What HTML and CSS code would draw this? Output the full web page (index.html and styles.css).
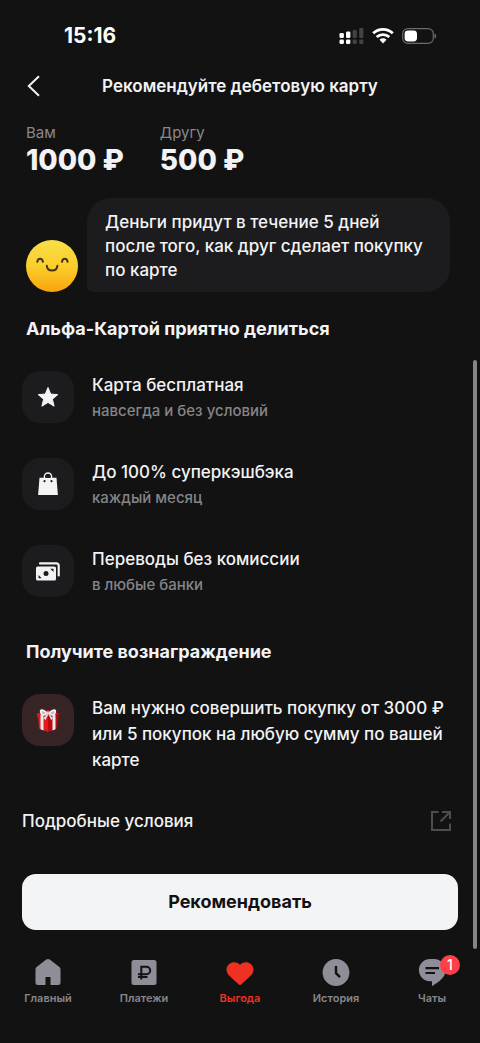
FILE: index.html
```html
<!DOCTYPE html>
<html lang="ru">
<head>
<meta charset="utf-8">
<meta name="viewport" content="width=device-width, initial-scale=1">
<title>Рекомендуйте дебетовую карту</title>
<link rel="stylesheet" href="styles.css">
</head>
<body>
<div class="screen">
  <div class="status">
    <span class="status-time">15:16</span>
    <div class="status-icons">
      <svg width="25" height="18" viewBox="0 0 25 18" aria-hidden="true">
        <g fill="#fff"><rect x="0.5" y="6" width="4.4" height="5" rx="1.3"/><rect x="7" y="4.500" width="4.400" height="6.500" rx="1.3"/><rect x="0.5" y="12.5" width="4.4" height="4.6" rx="1.3"/><rect x="7" y="12.5" width="4.4" height="4.6" rx="1.3"/></g>
        <g fill="#434344"><rect x="13.6" y="3" width="4.2" height="8" rx="1.3"/><rect x="20.2" y="1" width="4.2" height="10" rx="1.3"/><rect x="13.6" y="12.5" width="4.2" height="4.6" rx="1.3"/><rect x="20.2" y="12.5" width="4.2" height="4.6" rx="1.3"/></g>
      </svg>
      <svg width="22" height="18" viewBox="0 0 22 18" aria-hidden="true">
        <g fill="none" stroke="#fff" stroke-width="2.8"><path d="M1.2 6.300a14 14 0 0 1 19.600 0"/><path d="M4.700 10.100a9 9 0 0 1 12.600 0"/></g>
        <path d="M7.500 12.700a5 5 0 0 1 7 0L11 16.500z" fill="#fff"/>
      </svg>
      <svg width="35" height="18" viewBox="0 0 35 18" aria-hidden="true">
        <rect x=".7" y="1.700" width="30.600" height="14.600" rx="5" fill="none" stroke="#6b6b6c" stroke-width="1.2"/>
        <rect x="2.6" y="3.500" width="12.400" height="11" rx="3.400" fill="#fff"/>
        <path d="M32.500 6.400C34.800 7.300 34.800 10.700 32.500 11.600z" fill="#6b6b6c"/>
      </svg>
    </div>
  </div>

  <header class="header">
    <button class="back" type="button" aria-label="Назад">
      <svg width="14" height="22" viewBox="0 0 14 22" aria-hidden="true"><path d="M12 1.2 1.800 11 12 20.800" fill="none" stroke="#f3f3f4" stroke-width="2"/></svg>
    </button>
    <h1 class="header-title">Рекомендуйте дебетовую карту</h1>
  </header>

  <main class="content">
    <dl class="rewards">
      <div class="reward"><dt>Вам</dt><dd>1000 ₽</dd></div>
      <div class="reward"><dt>Другу</dt><dd>500 ₽</dd></div>
    </dl>

    <div class="message">
      <svg class="avatar" viewBox="0 0 52 52" aria-hidden="true">
        <defs><linearGradient id="face" x1="0" y1="0" x2="0" y2="1"><stop offset="0" stop-color="#f9de48"/><stop offset=".5" stop-color="#fbce2c"/><stop offset="1" stop-color="#f9a40c"/></linearGradient></defs>
        <circle cx="26" cy="26" r="26" fill="url(#face)"/>
        <g fill="none" stroke="#43331a" stroke-width="2" stroke-linecap="round"><path d="M11.300 21.800c.6-4 5-4 5.600 0"/><path d="M36 21.800c.6-4 5-4 5.600 0"/><path d="M20.800 25.800c.6 6.300 10 6.300 10.600 0"/></g>
      </svg>
      <p class="bubble">Деньги придут в течение 5 дней после того, как друг сделает покупку по карте</p>
    </div>

    <h2 class="section-title">Альфа-Картой приятно делиться</h2>
    <ul class="benefits">
      <li class="row">
        <span class="tile"><svg width="24" height="24" viewBox="0 0 24 24" aria-hidden="true"><path d="M12 2.500 14.700 9.100 21.800 9.600 16.400 14.200 18.100 21.200 12 17.400 5.900 21.200 7.600 14.200 2.200 9.600 9.300 9.100z" fill="#f3f3f4" stroke="#f3f3f4" stroke-width="1" stroke-linejoin="round"/></svg></span>
        <div class="row-text"><p class="row-title">Карта бесплатная</p><p class="row-note">навсегда и без условий</p></div>
      </li>
      <li class="row">
        <span class="tile"><svg width="24" height="24" viewBox="0 0 24 24" aria-hidden="true"><path d="M3.500 5.800h17l1.400 17.200H2.100z" fill="#f3f3f4"/><path d="M8.500 8.500V4.500a3.500 3.500 0 0 1 7 0v4" fill="none" stroke="#f3f3f4" stroke-width="1.600"/><path d="M9.300 5.800V4.800a2.700 2.700 0 0 1 5.400 0v1z" fill="#1c1c1e"/><circle cx="8.500" cy="9.200" r="1.100" fill="#1c1c1e"/><circle cx="15.500" cy="9.200" r="1.100" fill="#1c1c1e"/></svg></span>
        <div class="row-text"><p class="row-title">До 100% суперкэшбэка</p><p class="row-note">каждый месяц</p></div>
      </li>
      <li class="row">
        <span class="tile"><svg width="24" height="24" viewBox="0 0 24 24" aria-hidden="true"><path d="M4 4.400h16.500a2.200 2.200 0 0 1 2.200 2.200v9.800" fill="none" stroke="#f3f3f4" stroke-width="2.200" stroke-linecap="round"/><rect x="0" y="7.500" width="20" height="14" rx="1.600" fill="#f3f3f4"/><circle cx="10" cy="14.500" r="2.500" fill="#1c1c1e"/><path d="M2.500 19.300v-3.200l3.200 3.200zM17.500 9.700v3.200l-3.200-3.200z" fill="#1c1c1e"/></svg></span>
        <div class="row-text"><p class="row-title">Переводы без комиссии</p><p class="row-note">в любые банки</p></div>
      </li>
    </ul>

    <h2 class="section-title section-title-last">Получите вознаграждение</h2>
    <div class="row">
      <span class="tile tile-gift"><svg width="24" height="24" viewBox="0 0 24 24" aria-hidden="true">
        <path d="M2 8 12 11v13L3 20.500z" fill="#e3191b"/><path d="M22 8 12 11v13l9-3.500z" fill="#b90c10"/>
        <path d="M1 5.500 12 2l11 3.500V9l-11 3.500L1 9z" fill="#d91619"/><path d="M12 8.500 23 5.500V9l-11 3.500z" fill="#a9090d"/>
        <path d="M4.500 6.500 7.500 7.500v15l-3-1.200zM19.500 6.500l-3 1v15l3-1.200z" fill="#ece9ec"/>
        <path d="M12 5C9 1.500 5 0 4 2.200 3.300 4 5 7 6 7.500c2 .8 4.500-.5 6-2.500zM12 5c3-3.500 7-5 8-2.800.7 1.800-1 4.800-2 5.300-2 .8-4.500-.5-6-2.500z" fill="#f2eff2"/>
        <path d="m11.500 5-4.500 6 1.500-.2.800 1.700L12.500 6l2.700 6.500.8-1.700 1.500.2-5-6z" fill="#e2dde2"/><path d="M6 3.200c1.300 0 2.800 1 3.800 2-1.200.6-2.700.9-3.300.5C6 5 5.700 4 6 3.200zM18 3.200c-1.300 0-2.800 1-3.800 2 1.200.6 2.700.9 3.300.5.500-.7.800-1.700.5-2.500z" fill="#bdb6be"/><circle cx="12" cy="4.800" r="1.600" fill="#d4ccd3"/>
      </svg></span>
      <p class="row-title row-text">Вам нужно совершить покупку от 3000 ₽ или 5 покупок на любую сумму по вашей карте</p>
    </div>

    <a class="terms" href="#">
      <span>Подробные условия</span>
      <svg width="22" height="22" viewBox="0 0 22 22" aria-hidden="true"><path d="M8.500 2H2v18h18v-6.500M12 2h8v7M20 2l-9.500 9.500" fill="none" stroke="#4d4d4f" stroke-width="2"/></svg>
    </a>
    <button class="primary" type="button">Рекомендовать</button>
  </main>

  <nav class="tabs">
    <a class="tab" href="#">
      <svg width="28" height="28" viewBox="0 0 28 28" aria-hidden="true"><path d="M12.300 1.600a3 3 0 0 1 3.400 0l9.400 7.200a3 3 0 0 1 1.400 2.500v13.200a2.500 2.500 0 0 1-2.500 2.500h-7.500v-8h-5v8H4a2.500 2.500 0 0 1-2.500-2.500V11.300a3 3 0 0 1 1.400-2.500z" fill="#8e8e98"/></svg>
      <span>Главный</span>
    </a>
    <a class="tab" href="#">
      <svg width="28" height="28" viewBox="0 0 28 28" aria-hidden="true"><rect x="1.500" y="2" width="25" height="25" rx="2.500" fill="#8e8e98"/><path d="M11.300 21.500V8.800h5.200a3.700 3.700 0 0 1 0 7.400H8M8 19h9.500" fill="none" stroke="#121213" stroke-width="2"/></svg>
      <span>Платежи</span>
    </a>
    <a class="tab tab-active" href="#" aria-current="page">
      <svg width="28" height="28" viewBox="0 0 28 28" aria-hidden="true"><path d="M14 6.800C11.500 3.900 6.700 3.400 3.300 5.900-.5 8.800-.1 14 2.800 17.200l9.400 8.900a2.600 2.600 0 0 0 3.600 0l9.400-8.900c2.900-3.200 3.300-8.400-.5-11.300C21.300 3.400 16.500 3.900 14 6.800z" fill="#ef3124"/></svg>
      <span>Выгода</span>
    </a>
    <a class="tab" href="#">
      <svg width="28" height="28" viewBox="0 0 28 28" aria-hidden="true"><circle cx="14" cy="14.500" r="13.400" fill="#8e8e98"/><path d="M14 8v7.200l4 4" fill="none" stroke="#121213" stroke-width="2.400"/></svg>
      <span>История</span>
    </a>
    <a class="tab" href="#">
      <span class="tab-icon">
        <svg width="28" height="28" viewBox="0 0 28 28" aria-hidden="true"><path d="M12 1h4a11.500 11.500 0 0 1 11.500 11.500c0 6-5 10.500-13.500 15.700v-5h-2A11 11 0 0 1 12 1z" fill="#8e8e98"/><path d="M7.500 10.200h13.500M7.500 15h9.500" stroke="#121213" stroke-width="2.200"/></svg>
        <span class="badge">1</span>
      </span>
      <span>Чаты</span>
    </a>
  </nav>
  <div class="scroll-thumb"></div>
</div>
</body>
</html>
```
FILE: styles.css
```css
* {
  box-sizing: border-box;
}

body {
  margin: 0;
  background: #121213;
  color: #f3f3f4;
  font-family: Inter, "Noto Sans", sans-serif;
}

h1, h2, p, ul, dl, dd {
  margin: 0;
  padding: 0;
}

button {
  border: 0;
  font-family: inherit;
  cursor: pointer;
}

a {
  color: inherit;
  text-decoration: none;
}

svg {
  display: block;
}

.screen {
  position: relative;
  min-height: 100vh;
}

.status {
  display: flex;
  align-items: center;
  justify-content: space-between;
  height: 60px;
  padding: 11px 43px 0 64px;
}

.status-time {
  font-size: 21px;
  font-weight: 700;
  color: #fff;
}

.status-icons {
  display: flex;
  gap: 8px;
}

.header {
  display: grid;
  grid-template-columns: 44px 1fr 44px;
  align-items: center;
  height: 51px;
  padding: 0 12px;
}

.back {
  display: flex;
  justify-content: center;
  padding: 11px 0;
  background: none;
}

.header-title {
  font-size: 17px;
  line-height: 24px;
  font-weight: 600;
  text-align: center;
  white-space: nowrap;
}

.content {
  padding: 12px 22px 0;
}

.rewards {
  display: flex;
  gap: 36px;
  padding: 0 4px;
}

.reward dt {
  font-size: 15px;
  line-height: 20px;
  color: #88888a;
}

.reward dd {
  font-size: 28px;
  line-height: 34px;
  font-weight: 800;
}

.message {
  display: flex;
  align-items: flex-end;
  gap: 9px;
  margin-top: 21px;
  padding: 0 8px 0 4px;
}

.avatar {
  flex: none;
  width: 52px;
  height: 52px;
}

.bubble {
  flex: 1;
  padding: 12px 18px 10px;
  border-radius: 24px 24px 24px 6px;
  background: #1c1c1e;
  font-size: 17px;
  line-height: 24px;
  font-weight: 500;
}

.section-title {
  margin: 25px 4px 30px;
  font-size: 18px;
  line-height: 24px;
  font-weight: 700;
}

.section-title-last {
  margin-top: 42px;
}

.benefits {
  display: grid;
  gap: 34px;
  list-style: none;
}

.row {
  display: flex;
  align-items: flex-start;
  gap: 18px;
}

.row-text {
  flex: 1;
  padding-top: 1px;
}

.tile {
  display: grid;
  flex: none;
  place-items: center;
  width: 52px;
  height: 52px;
  border-radius: 18px;
  background: #1c1c1e;
}

.tile-gift {
  background: #372424;
}

.row-title {
  font-size: 17px;
  line-height: 26px;
  font-weight: 500;
}

.row-text.row-title {
  padding-top: 1px;
}

.row-note {
  font-size: 15px;
  line-height: 26px;
  font-weight: 500;
  color: #858587;
}

.terms {
  display: flex;
  align-items: center;
  justify-content: space-between;
  margin-top: 36px;
  padding-right: 6px;
  font-size: 17px;
  line-height: 24px;
  font-weight: 500;
}

.primary {
  display: block;
  width: 100%;
  margin-top: 41px;
  padding: 16px;
  border-radius: 14px;
  background: #f3f4f6;
  color: #121213;
  font-size: 18px;
  line-height: 24px;
  font-weight: 700;
}

.tabs {
  display: grid;
  grid-template-columns: repeat(5, 1fr);
  padding: 28px 0 34px;
}

.tab {
  display: flex;
  flex-direction: column;
  align-items: center;
  gap: 4px;
  color: #86868a;
  font-size: 11px;
  line-height: 16px;
  font-weight: 600;
}

.tab-active {
  color: #ef3124;
}

.tab-icon {
  position: relative;
}

.badge {
  position: absolute;
  top: -3px;
  right: -14px;
  width: 20px;
  border-radius: 10px;
  background: #ff4048;
  color: #fff;
  font-size: 14px;
  line-height: 20px;
  font-weight: 500;
  text-align: center;
}

.scroll-thumb {
  position: absolute;
  top: 360px;
  right: 3px;
  bottom: 94px;
  width: 4px;
  border-radius: 2px;
  background: #868687;
}
```
